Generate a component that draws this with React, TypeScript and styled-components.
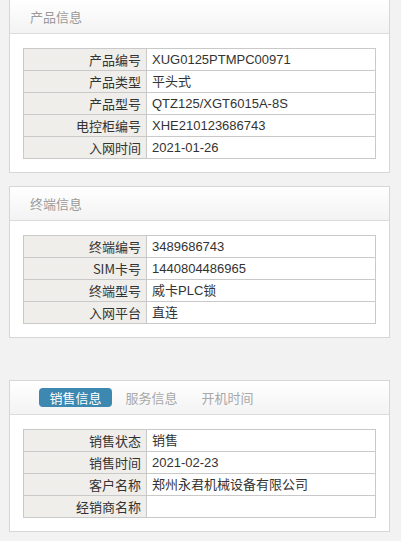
import React from "react";
import styled, { createGlobalStyle } from "styled-components";

const Global = createGlobalStyle`
  html, body { margin: 0; padding: 0; background: #f2f2f2; }
  body {
    font-family: "Liberation Sans", Arial, "Noto Sans CJK SC", sans-serif;
    font-size: 13px;
    color: #333;
  }
`;

const Page = styled.div`
  display: flex;
  flex-direction: column;
  padding: 0 11px 10px 9px;
  margin-top: -1px;
`;

const Panel = styled.section<{ $gap?: number }>`
  background: #fff;
  border: 1px solid #d6d6d6;
  margin-bottom: ${(p) => p.$gap ?? 13}px;
`;

const Header = styled.div`
  height: 33px;
  border-bottom: 1px solid #dcdcdc;
  background: linear-gradient(to bottom, #ffffff 0%, #f3f3f3 100%);
  display: flex;
  align-items: center;
  padding-left: 20px;
  color: #9a9a9a;
  font-family: "Noto Sans CJK SC", sans-serif;
  font-size: 13px;
`;

const TabBar = styled.div`
  height: 33px;
  border-bottom: 1px solid #dcdcdc;
  background: linear-gradient(to bottom, #ffffff 0%, #f3f3f3 100%);
  display: flex;
  align-items: center;
  gap: 3px;
  padding-left: 29px;
`;

const Tab = styled.div<{ $active?: boolean }>`
  height: 19px;
  line-height: 19px;
  padding: 0 10.5px;
  border-radius: 4px;
  font-family: "Noto Sans CJK SC", sans-serif;
  font-size: 13px;
  background: ${(p) => (p.$active ? "#3d88b0" : "transparent")};
  color: ${(p) => (p.$active ? "#ffffff" : "#a8a8a8")};
`;

const Body = styled.div`
  padding: 14px 13px 13px;
`;

const Table = styled.table`
  width: 100%;
  border-collapse: collapse;
  table-layout: fixed;
`;

const Label = styled.td`
  width: 117px;
  height: 21px;
  padding: 0 5px 0 0;
  border: 1px solid #c9c9c9;
  background: #efeeea;
  text-align: right;
  white-space: nowrap;
  font-family: "Noto Sans CJK SC", sans-serif;
  font-size: 13px;
  line-height: 21px;
  color: #333;
`;

const Value = styled.td`
  height: 21px;
  padding: 0 0 0 5px;
  border: 1px solid #c9c9c9;
  background: #fff;
  white-space: nowrap;
  font-family: "Liberation Sans", Arial, "Noto Sans CJK SC", sans-serif;
  font-size: 13px;
  line-height: 21px;
  color: #333;
`;

type Row = [string, string];

const InfoTable = ({ rows }: { rows: Row[] }) => (
  <Table>
    <tbody>
      {rows.map(([k, v]) => (
        <tr key={k}>
          <Label>{k}</Label>
          <Value>{v}</Value>
        </tr>
      ))}
    </tbody>
  </Table>
);

const product: Row[] = [
  ["产品编号", "XUG0125PTMPC00971"],
  ["产品类型", "平头式"],
  ["产品型号", "QTZ125/XGT6015A-8S"],
  ["电控柜编号", "XHE210123686743"],
  ["入网时间", "2021-01-26"],
];

const terminal: Row[] = [
  ["终端编号", "3489686743"],
  ["SIM卡号", "1440804486965"],
  ["终端型号", "威卡PLC锁"],
  ["入网平台", "直连"],
];

const sales: Row[] = [
  ["销售状态", "销售"],
  ["销售时间", "2021-02-23"],
  ["客户名称", "郑州永君机械设备有限公司"],
  ["经销商名称", ""],
];

export default function App() {
  return (
    <>
      <Global />
      <Page>
        <Panel $gap={13}>
          <Header>产品信息</Header>
          <Body>
            <InfoTable rows={product} />
          </Body>
        </Panel>
        <Panel $gap={42}>
          <Header>终端信息</Header>
          <Body>
            <InfoTable rows={terminal} />
          </Body>
        </Panel>
        <Panel $gap={0}>
          <TabBar>
            <Tab $active>销售信息</Tab>
            <Tab>服务信息</Tab>
            <Tab>开机时间</Tab>
          </TabBar>
          <Body>
            <InfoTable rows={sales} />
          </Body>
        </Panel>
      </Page>
    </>
  );
}
